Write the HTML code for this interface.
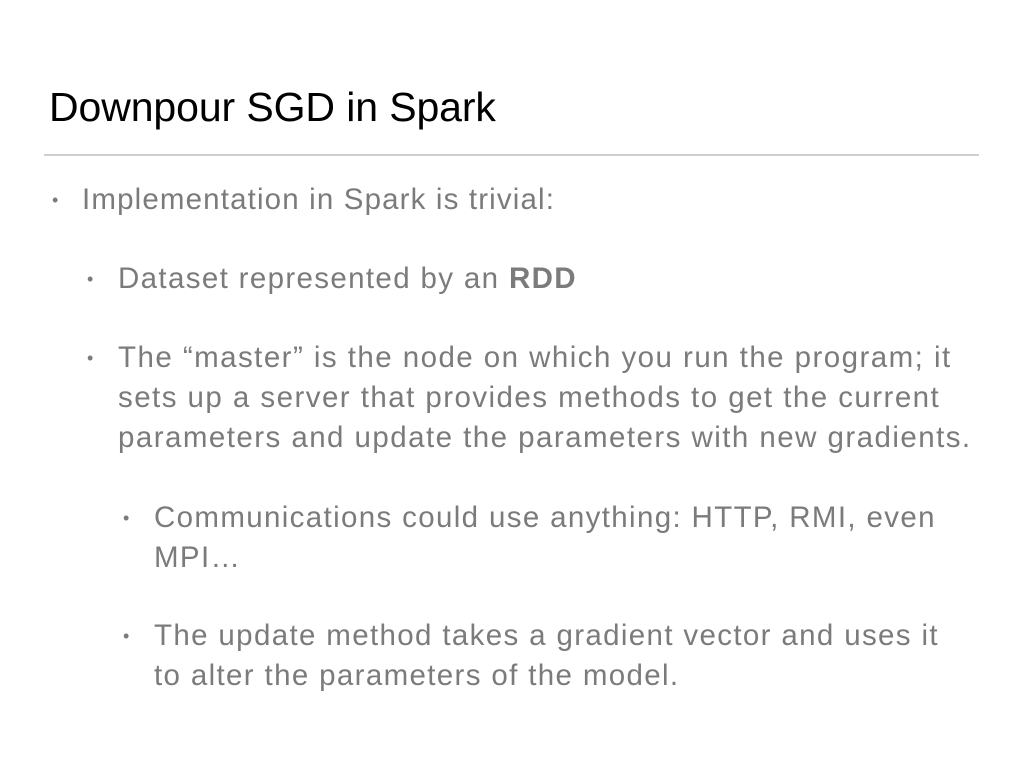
<!DOCTYPE html>
<html><head><meta charset="utf-8"><style>
body{margin:0;width:1024px;height:768px;background:#fff;position:relative;overflow:hidden;font-family:"Liberation Sans",sans-serif}
.t{position:absolute;left:49px;top:84px;font-size:41px;color:#000;white-space:nowrap;letter-spacing:-0.1px}
.hr{position:absolute;left:44px;top:154px;width:935px;height:2px;background:#cfcfcf}
.l{position:absolute;font-size:29.5px;color:#7b7b7b;white-space:nowrap;line-height:40px;letter-spacing:1.35px}
.b{position:absolute;font-size:18px;color:#7b7b7b}
</style></head><body>
<div class="t">Downpour SGD in Spark</div>
<div class="hr"></div>
<div class="b" style="left:52px;top:190px">•</div>
<div class="l" style="left:82px;top:180px;letter-spacing:1.15px">Implementation in Spark is trivial:</div>
<div class="b" style="left:87px;top:269px">•</div>
<div class="l" style="left:118px;top:259px">Dataset represented by an <b>RDD</b></div>
<div class="b" style="left:87px;top:348px">•</div>
<div class="l" style="left:118px;top:338px;letter-spacing:1.45px">The “master” is the node on which you run the program; it<br>sets up a server that provides methods to get the current<br>parameters and update the parameters with new gradients.</div>
<div class="b" style="left:123px;top:508px">•</div>
<div class="l" style="left:154px;top:498px">Communications could use anything: HTTP, RMI, even<br>MPI…</div>
<div class="b" style="left:123px;top:626px">•</div>
<div class="l" style="left:154px;top:616px">The update method takes a gradient vector and uses it<br>to alter the parameters of the model.</div>
</body></html>
